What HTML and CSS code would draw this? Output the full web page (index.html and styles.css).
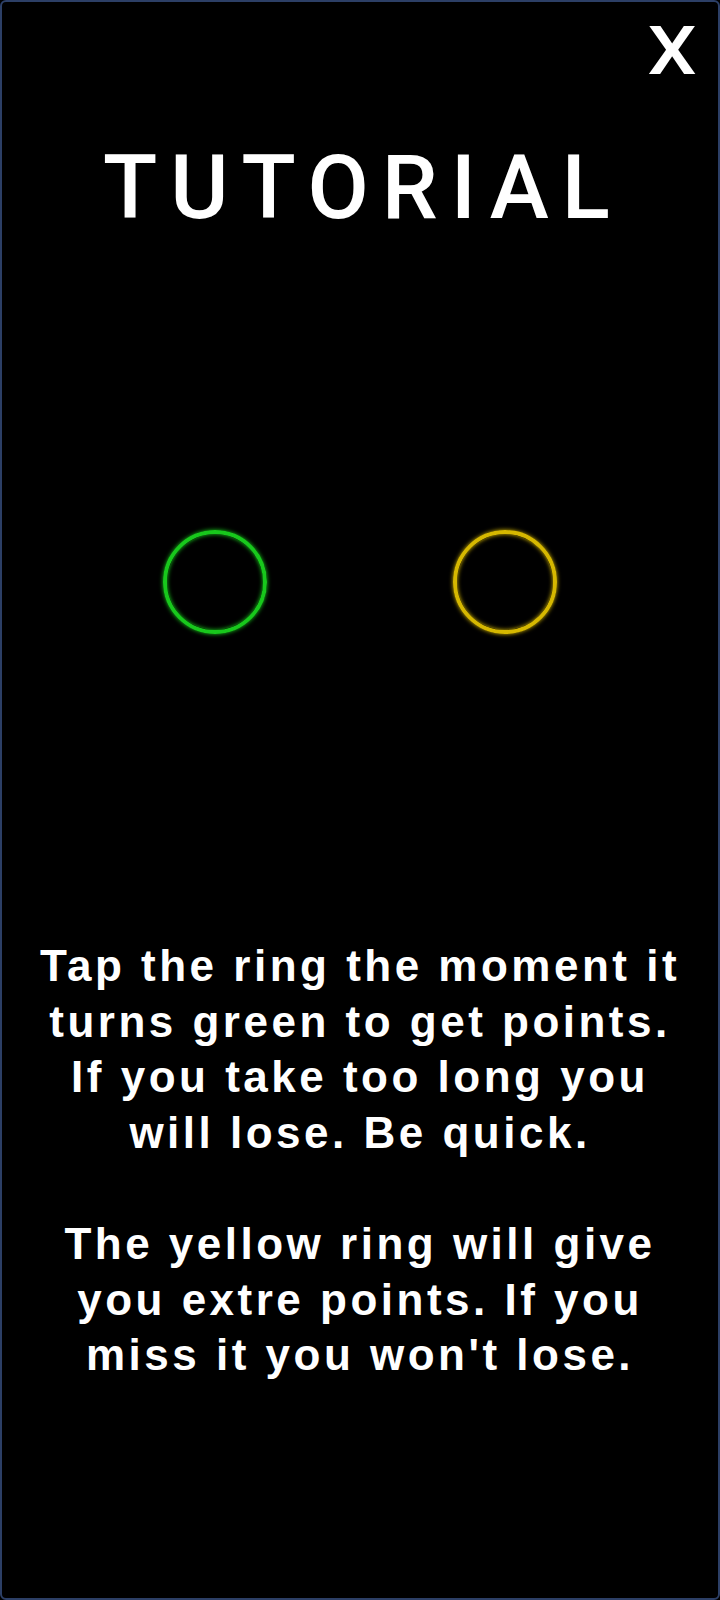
FILE: index.html
```html
<!DOCTYPE html>
<html lang="en">
<head>
<meta charset="utf-8">
<link rel="stylesheet" href="styles.css">
<title>Tutorial</title>
</head>
<body>
<div class="screen">
  <div class="topbar"><span class="close">X</span></div>
  <h1 class="title">TUTORIAL</h1>
  <div class="rings">
    <div class="ring ring-green"></div>
    <div class="ring ring-yellow"></div>
  </div>
  <div class="text">
    <p>Tap the ring the moment it<br>turns green to get points.<br>If you take too long you<br>will lose. Be quick.</p>
    <p>The yellow ring will give<br>you extre points. If you<br>miss it you won't lose.</p>
  </div>
</div>
</body>
</html>
```

FILE: styles.css
```css
html, body {
  margin: 0;
  padding: 0;
  background: #000;
}
.screen {
  box-sizing: border-box;
  width: 720px;
  height: 1600px;
  background: #000;
  border: 2px solid #2c3f66;
  border-radius: 6px;
  display: flex;
  flex-direction: column;
  color: #fff;
}
.topbar {
  display: flex;
  justify-content: flex-end;
  padding: 10px 21px 0 0;
  height: 82px;
}
.close {
  display: inline-block;
  font-family: "Roboto", "Liberation Sans", sans-serif;
  font-weight: 500;
  font-size: 66px;
  line-height: 80px;
  transform: scaleX(1.18);
  transform-origin: right center;
}
.title {
  margin: 39px 0 0 0;
  text-align: center;
  font-family: "Roboto", "Liberation Sans", sans-serif;
  font-weight: 500;
  font-size: 89px;
  letter-spacing: 13px;
  text-indent: 6px;
  line-height: 110px;
}
.rings {
  display: flex;
  justify-content: center;
  gap: 186px;
  margin-top: 287px;
}
.ring {
  box-sizing: border-box;
  width: 104px;
  height: 104px;
  border-radius: 50%;
  border: 4px solid;
}
.ring-green {
  border-color: #18c81c;
  box-shadow: 0 0 4px #18c81c, inset 0 0 4px #18c81c;
}
.ring-yellow {
  border-color: #d6b800;
  box-shadow: 0 0 4px #d6b800, inset 0 0 4px #d6b800;
}
.text {
  margin-top: 304px;
  text-align: center;
  font-family: "Liberation Sans", Arial, sans-serif;
  font-weight: bold;
  font-size: 44px;
  letter-spacing: 3.5px;
  line-height: 55.6px;
}
.text p {
  margin: 0 0 55.6px 0;
}
```
